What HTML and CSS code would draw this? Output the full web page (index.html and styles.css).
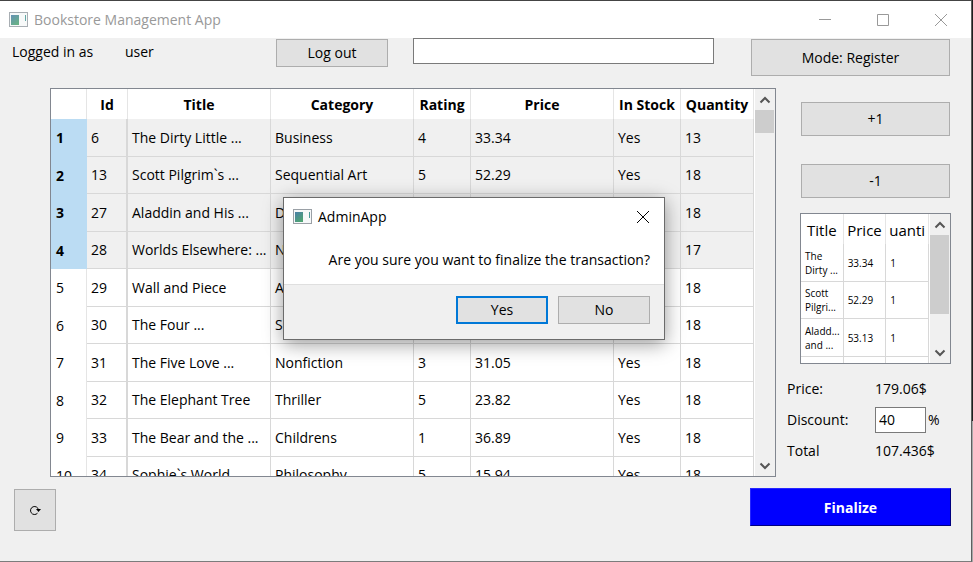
FILE: index.html
```html
<!DOCTYPE html>
<html lang="en">
<head>
<meta charset="utf-8">
<title>Bookstore Management App</title>
<link rel="stylesheet" href="styles.css">
</head>
<body>
<div class="window">
  <header class="titlebar">
    <svg class="app-icon" width="20" height="16" viewBox="0 0 20 16" aria-hidden="true">
      <defs><linearGradient id="pane" x1="0" y1="0" x2="0.6" y2="1"><stop offset="0" stop-color="#4a7fa8"/><stop offset="1" stop-color="#4ea373"/></linearGradient></defs>
      <rect x="0.5" y="0.5" width="18" height="14" fill="#f6f8f9" stroke="#9aa0a6"/>
      <rect x="2" y="3" width="8" height="10" fill="url(#pane)"/>
      <rect x="16" y="3" width="1" height="6" fill="#4a9a96"/>
    </svg>
    <h1 class="titlebar-text">Bookstore Management App</h1>
    <button class="caption-button" aria-label="Minimize"><svg width="14" height="14" viewBox="0 0 14 14"><path d="M1 6.500h12" /></svg></button>
    <button class="caption-button" aria-label="Maximize"><svg width="14" height="14" viewBox="0 0 14 14"><path d="M1.500 1.500h11v11h-11z"/></svg></button>
    <button class="caption-button" aria-label="Close"><svg width="14" height="14" viewBox="0 0 14 14"><path d="M1 1l12 12M13 1L1 13"/></svg></button>
  </header>

  <main class="content">
    <div class="toolbar">
      <span class="login-label">Logged in as</span>
      <span class="login-user">user</span>
      <button class="button logout">Log out</button>
      <input class="textbox search" type="text" aria-label="Search">
      <button class="button mode">Mode: Register</button>
    </div>

    <div class="workspace">
      <section class="grid-frame books">
        <div class="grid-view">
          <table class="book-table">
            <colgroup><col class="col-row"><col class="col-id"><col><col><col class="col-rating"><col><col class="col-stock"><col class="col-quantity"></colgroup>
            <thead><tr><td></td><th>Id</th><th>Title</th><th>Category</th><th>Rating</th><th>Price</th><th>In Stock</th><th>Quantity</th></tr></thead>
            <tbody>
              <tr class="selected"><th>1</th><td>6</td><td>The Dirty Little ...</td><td>Business</td><td>4</td><td>33.34</td><td>Yes</td><td>13</td></tr>
              <tr class="selected"><th>2</th><td>13</td><td>Scott Pilgrim`s ...</td><td>Sequential Art</td><td>5</td><td>52.29</td><td>Yes</td><td>18</td></tr>
              <tr class="selected"><th>3</th><td>27</td><td>Aladdin and His ...</td><td>D</td><td></td><td></td><td></td><td>18</td></tr>
              <tr class="selected"><th>4</th><td>28</td><td>Worlds Elsewhere: ...</td><td>N</td><td></td><td></td><td></td><td>17</td></tr>
              <tr><th>5</th><td>29</td><td>Wall and Piece</td><td>A</td><td></td><td></td><td></td><td>18</td></tr>
              <tr><th>6</th><td>30</td><td>The Four ...</td><td>S</td><td></td><td></td><td></td><td>18</td></tr>
              <tr><th>7</th><td>31</td><td>The Five Love ...</td><td>Nonfiction</td><td>3</td><td>31.05</td><td>Yes</td><td>18</td></tr>
              <tr><th>8</th><td>32</td><td>The Elephant Tree</td><td>Thriller</td><td>5</td><td>23.82</td><td>Yes</td><td>18</td></tr>
              <tr><th>9</th><td>33</td><td>The Bear and the ...</td><td>Childrens</td><td>1</td><td>36.89</td><td>Yes</td><td>18</td></tr>
              <tr><th>10</th><td>34</td><td>Sophie`s World</td><td>Philosophy</td><td>5</td><td>15.94</td><td>Yes</td><td>18</td></tr>
            </tbody>
          </table>
        </div>
        <div class="scrollbar">
          <svg class="arrow" width="12" height="8" viewBox="0 0 12 8"><path d="M1.500 6.500L6 2l4.500 4.500"/></svg>
          <div class="track"><div class="thumb thumb-short"></div></div>
          <svg class="arrow" width="12" height="8" viewBox="0 0 12 8"><path d="M1.500 1.500L6 6l4.500-4.500"/></svg>
        </div>
      </section>

      <aside class="side">
        <button class="button step">+1</button>
        <button class="button step">-1</button>
        <section class="grid-frame cart">
          <div class="grid-view">
            <table class="cart-table">
              <thead><tr><th>Title</th><th>Price</th><th>uanti</th></tr></thead>
              <tbody>
                <tr><td>The<br>Dirty ...</td><td>33.34</td><td>1</td></tr>
                <tr><td>Scott<br>Pilgri...</td><td>52.29</td><td>1</td></tr>
                <tr><td>Aladd...<br>and ...</td><td>53.13</td><td>1</td></tr>
                <tr><td></td><td></td><td></td></tr>
              </tbody>
            </table>
          </div>
          <div class="scrollbar">
            <svg class="arrow" width="12" height="8" viewBox="0 0 12 8"><path d="M1.500 6.500L6 2l4.500 4.500"/></svg>
            <div class="track"><div class="thumb thumb-long"></div></div>
            <svg class="arrow" width="12" height="8" viewBox="0 0 12 8"><path d="M1.500 1.500L6 6l4.500-4.500"/></svg>
          </div>
        </section>
        <div class="totals">
          <span>Price:</span><span>179.06$</span>
          <label for="discount">Discount:</label>
          <span class="discount"><input class="textbox" id="discount" type="text" value="40">%</span>
          <span>Total</span><span>107.436$</span>
        </div>
      </aside>
    </div>

    <div class="actions">
      <button class="button refresh" aria-label="Refresh">
        <svg width="12" height="12" viewBox="0 0 12 12"><path d="M8.500 9.200A4 4 0 1 1 9.500 6" /><path d="M7 5h5L9.500 8z" class="tip"/></svg>
      </button>
      <button class="finalize">Finalize</button>
    </div>
  </main>

  <div class="dialog" role="dialog" aria-labelledby="dialog-title">
    <div class="dialog-bar">
      <svg class="app-icon" width="20" height="16" viewBox="0 0 20 16" aria-hidden="true">
        <rect x="0.5" y="0.5" width="18" height="14" fill="#f6f8f9" stroke="#9aa0a6"/>
        <rect x="2" y="3" width="8" height="10" fill="url(#pane)"/>
        <rect x="16" y="3" width="1" height="6" fill="#4a9a96"/>
      </svg>
      <h2 class="dialog-title" id="dialog-title">AdminApp</h2>
      <button class="dialog-close" aria-label="Close"><svg width="14" height="14" viewBox="0 0 14 14"><path d="M1 1l12 12M13 1L1 13"/></svg></button>
    </div>
    <p class="dialog-message">Are you sure you want to finalize the transaction?</p>
    <div class="dialog-buttons">
      <button class="button default">Yes</button>
      <button class="button">No</button>
    </div>
  </div>
</div>
</body>
</html>
```
FILE: styles.css
```css
* { box-sizing: border-box; }

body {
  margin: 0;
  background: linear-gradient(#1f1f1f 75%, #a8a8a8 75%);
  color: #000;
  font: 14px/20px "Open Sans", "Noto Sans", sans-serif;
}

button, input { font: inherit; color: inherit; margin: 0; padding: 0; }
h1, h2, p { margin: 0; font: inherit; }
svg { display: block; fill: none; stroke: currentColor; }
.app-icon { stroke: none; }

.window {
  position: relative;
  display: flex;
  flex-direction: column;
  height: 100vh;
  margin-right: 1px;
  background: #f0f0f0;
  border-top: 1px solid #444;
  border-right: 1px solid #5f5f5f;
  border-bottom: 1px solid #7c7c7c;
}

.titlebar {
  display: flex;
  align-items: center;
  height: 37px;
  padding: 0 1px 0 9px;
  background: #fff;
  color: #999;
}
.titlebar .app-icon { opacity: 0.85; }
.titlebar-text { flex: 1; margin-left: 5px; }
.caption-button {
  display: grid;
  place-items: center;
  width: 58px;
  height: 36px;
  border: 0;
  background: none;
}

.content { flex: 1; min-height: 0; display: flex; flex-direction: column; }

.button {
  border: 1px solid #adadad;
  background: #e1e1e1;
}
.textbox {
  border: 1px solid #7a7a7a;
  background: #fff;
  height: 26px;
  padding: 0 3px;
}

.toolbar {
  display: flex;
  align-items: flex-start;
  height: 50px;
  padding: 0 21px 0 12px;
}
.login-label { width: 113px; margin-top: 4px; }
.login-user { width: 151px; margin-top: 4px; }
.logout { width: 112px; height: 28px; margin-top: 1px; }
.search { flex: 1; min-width: 0; margin: 0 37px 0 25px; }
.mode { width: 199px; height: 37px; margin-top: 1px; }

.workspace {
  flex: 1;
  min-height: 0;
  display: flex;
  gap: 11px;
  padding: 0 20px 0 50px;
}

.grid-frame { display: flex; border: 1px solid #828790; background: #fff; }
.grid-view { flex: 1; min-width: 0; overflow: hidden; }
.books { flex: 1; min-width: 0; }

table { width: 100%; table-layout: fixed; border-collapse: separate; border-spacing: 0; }
th, td { padding: 0; }
thead tr { height: 30px; }
tbody tr { height: 37px; }
tbody tr:nth-child(odd) { height: 38px; }
thead th, thead td { border-right: 1px solid #e5e5e5; }
tbody td {
  padding-left: 4px;
  border-right: 1px solid #d8d8d8;
  border-bottom: 1px solid #d8d8d8;
  white-space: nowrap;
}

.book-table thead th { font-weight: 700; padding-top: 2px; }
.book-table tbody th {
  padding-left: 5px;
  border-right: 1px solid #e5e5e5;
  font-weight: 400;
  text-align: left;
}
.book-table tbody td:nth-child(2) { border-right-width: 2px; }
.book-table .selected th { font-weight: 700; background: #bbdcf3; border-color: #bbdcf3; }
.book-table .selected td { background: #f0f0f0; }
.col-row { width: 36px; }
.col-id { width: 41px; }
.col-rating { width: 57px; }
.col-stock { width: 67px; }
.col-quantity { width: 73px; }

.scrollbar {
  display: flex;
  flex-direction: column;
  align-items: center;
  width: 20px;
  margin-left: 1px;
  padding-right: 1px;
  background: #f0f0f0;
}
.arrow { margin: 7px 0 6px; stroke: #555; stroke-width: 2; }
.track { flex: 1; width: 100%; }
.thumb { background: #cdcdcd; }
.thumb-short { height: 23px; }
.thumb-long { height: 79px; }

.side { width: 164px; padding-top: 14px; }
.step { display: block; width: 149px; height: 34px; margin: 0 1px 28px auto; }
.cart { height: 151px; margin: -13px 0 9px 13px; }
.cart-table th { font-size: 15px; font-weight: 400; padding-top: 2px; }
.cart-table td { font-size: 10px; line-height: 14px; }

.totals {
  display: grid;
  grid-template-columns: 88px 1fr;
  grid-auto-rows: 31px;
  align-items: center;
}
.discount { display: flex; align-items: center; gap: 2px; }
.discount .textbox { width: 51px; }

.actions {
  display: flex;
  justify-content: space-between;
  align-items: flex-start;
  padding: 11px 20px 30px 14px;
}
.refresh { display: grid; place-items: center; width: 42px; height: 42px; margin-top: 1px; }
.refresh .tip { fill: #000; stroke: none; }
.finalize {
  width: 201px;
  height: 38px;
  padding-top: 2px;
  border: 1px solid;
  border-color: #2626ff #000080 #000080 #2626ff;
  background: #00f;
  color: #fff;
  font-weight: 700;
}

.dialog {
  position: absolute;
  left: 283px;
  top: 196px;
  border: 1px solid #6b6b6b;
  background: #fff;
  width: 382px;
  box-shadow: 0 4px 18px rgba(0, 0, 0, 0.4);
}
.dialog-bar { display: flex; align-items: center; height: 37px; padding: 0 14px 0 9px; }
.dialog-title { flex: 1; margin-left: 5px; }
.dialog-close { border: 0; background: none; }
.dialog-message { padding: 15px 14px 14px; text-align: right; white-space: nowrap; }
.dialog-buttons {
  display: flex;
  justify-content: flex-end;
  gap: 10px;
  padding: 11px 14px 15px;
  border-top: 1px solid #dfdfdf;
  background: #f0f0f0;
}
.dialog-buttons .button { width: 92px; height: 28px; }
.dialog-buttons .default { border: 2px solid #0078d7; }
```
